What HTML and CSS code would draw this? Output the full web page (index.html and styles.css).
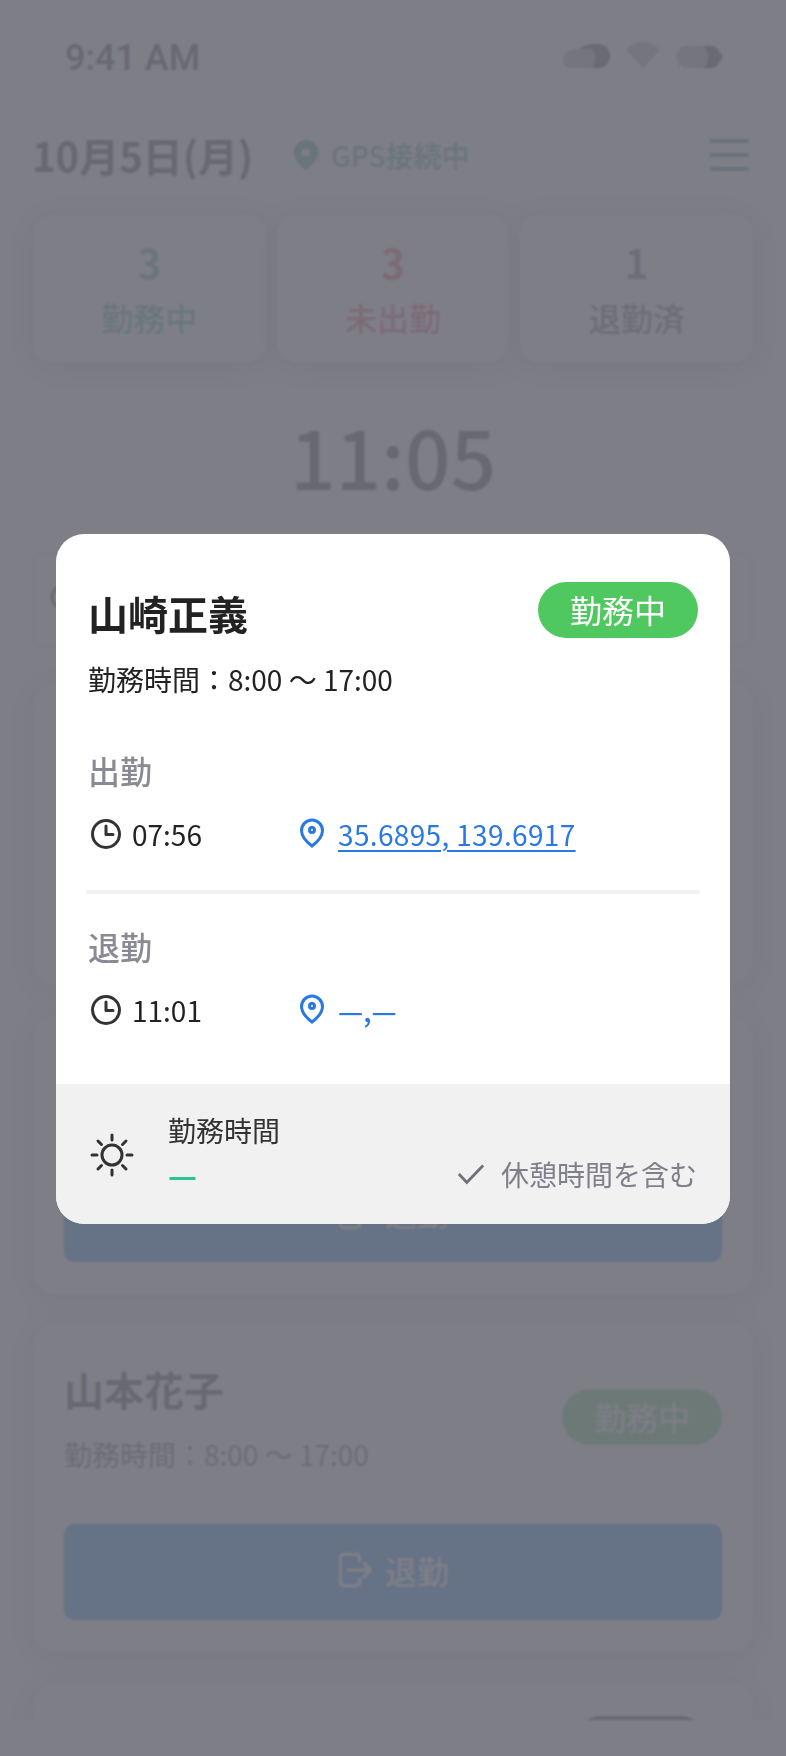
FILE: index.html
```html
<!DOCTYPE html>
<html lang="ja">
<head>
    <meta charset="UTF-8">
    <meta name="viewport" content="width=device-width, initial-scale=1.0">
    <title>勤怠管理</title>
    <link rel="stylesheet" href="styles.css">
</head>
<body>
    <div class="page">
        <div class="status-bar">
            <span class="status-time">9:41 AM</span>
            <div class="status-icons">
                <svg width="47" height="24" viewBox="0 0 47 24"><path class="icon-back" d="M14 24V12C14 5 20 0 32 0h3a12 12 0 0 1 0 24z"/><path class="icon-front" d="M0 16c0-5 4-9 9-10L28 4c3 2 4 6 4 10 0 4-1 7-3 10H8c-4 0-8-3-8-8z"/></svg>
                <svg width="34" height="26" viewBox="0 0 34 26"><path class="icon-front" d="M0 8C5 3 11 0 17 0s12 3 17 8L17 26z"/></svg>
                <svg width="47" height="22" viewBox="0 0 47 22"><path class="icon-back" d="M20 0h16c3 0 5 2 6 4l5 7-5 7c-1 2-3 4-6 4H20z"/><path class="icon-front" d="M11 0h16c4 3 5 7 5 11s-1 8-5 11H11a11 11 0 0 1 0-22z"/></svg>
            </div>
        </div>

        <header class="top-bar">
            <h1 class="date">10月5日(月)</h1>
            <div class="gps">
                <svg width="26" height="30" viewBox="0 0 26 30"><path class="gps-pin" fill-rule="evenodd" d="M13 0a12.500 12.500 0 0 1 12.500 12.500C25.500 20 17 27 13 30 9 27 .5 20 .5 12.500A12.500 12.500 0 0 1 13 0zm0 8.500a4 4 0 1 0 0 8 4 4 0 0 0 0-8z"/></svg>
                <span>GPS接続中</span>
            </div>
            <div class="menu"><i></i><i></i><i></i></div>
        </header>

        <section class="stats">
            <div class="stat stat-green"><b>3</b><span>勤務中</span></div>
            <div class="stat stat-red"><b>3</b><span>未出勤</span></div>
            <div class="stat stat-gray"><b>1</b><span>退勤済</span></div>
        </section>

        <div class="clock">11:05</div>

        <div class="search">
            <svg width="32" height="32" viewBox="0 0 32 32"><circle class="search-ring" cx="14" cy="14" r="11"/><path class="search-ring" d="M22 22l8 8"/></svg>
        </div>

        <div class="card card-first"></div>

        <div class="card card-second">
            <button class="leave-btn">
                <svg width="36" height="36" viewBox="0 0 32 32"><path class="leave-icon" d="M17 2H6a3 3 0 0 0-3 3v22a3 3 0 0 0 3 3h11a3 3 0 0 0 3-3v-3M20 8V5a3 3 0 0 0-3-3M10 16h20M24 10l6 6-6 6"/></svg>
                <span>退勤</span>
            </button>
        </div>

        <div class="card card-third">
            <div class="card-head">
                <div>
                    <div class="card-name">山本花子</div>
                    <div class="card-hours">勤務時間：8:00 〜 17:00</div>
                </div>
                <span class="badge">勤務中</span>
            </div>
            <button class="leave-btn">
                <svg width="36" height="36" viewBox="0 0 32 32"><path class="leave-icon" d="M17 2H6a3 3 0 0 0-3 3v22a3 3 0 0 0 3 3h11a3 3 0 0 0 3-3v-3M20 8V5a3 3 0 0 0-3-3M10 16h20M24 10l6 6-6 6"/></svg>
                <span>退勤</span>
            </button>
        </div>

        <div class="card card-last">
            <span class="badge badge-gray"></span>
        </div>

        <div class="page-foot"></div>
    </div>

    <div class="overlay">
        <div class="modal">
            <div class="modal-body">
                <div class="modal-head">
                    <h2 class="modal-name">山崎正義</h2>
                    <span class="modal-badge">勤務中</span>
                </div>
                <p class="modal-hours">勤務時間：8:00 〜 17:00</p>

                <h3 class="punch-title punch-title-in">出勤</h3>
                <div class="punch-row">
                    <div class="punch-time">
                        <svg width="32" height="32" viewBox="0 0 32 32"><circle class="clock-icon" cx="16" cy="16" r="13.500"/><path class="clock-icon" d="M16 8v8.500h7"/></svg>
                        <span>07:56</span>
                    </div>
                    <svg class="pin" width="26" height="30" viewBox="0 0 26 30"><path class="pin-line" d="M13 2a10.500 10.500 0 0 1 10.500 10.500C23.500 19 17 25 13 28 9 25 2.500 19 2.500 12.500A10.500 10.500 0 0 1 13 2z"/><circle class="pin-line" cx="13" cy="12" r="2.500"/></svg>
                    <a class="coords" href="#">35.6895, 139.6917</a>
                </div>

                <div class="divider"></div>

                <h3 class="punch-title">退勤</h3>
                <div class="punch-row">
                    <div class="punch-time">
                        <svg width="32" height="32" viewBox="0 0 32 32"><circle class="clock-icon" cx="16" cy="16" r="13.500"/><path class="clock-icon" d="M16 8v8.500h7"/></svg>
                        <span>11:01</span>
                    </div>
                    <svg class="pin" width="26" height="30" viewBox="0 0 26 30"><path class="pin-line" d="M13 2a10.500 10.500 0 0 1 10.500 10.500C23.500 19 17 25 13 28 9 25 2.500 19 2.500 12.500A10.500 10.500 0 0 1 13 2z"/><circle class="pin-line" cx="13" cy="12" r="2.500"/></svg>
                    <span class="coords coords-empty">—,—</span>
                </div>
            </div>

            <div class="modal-foot">
                <svg class="sun" width="44" height="44" viewBox="0 0 44 44"><circle class="sun-line" cx="22" cy="22" r="10"/><path class="sun-line" d="M22 2v5M22 37v5M2 22h5M37 22h5M8 8l3.500 3.500M32.500 32.500L36 36M8 36l3.500-3.500M32.500 11.500L36 8"/></svg>
                <div class="total">
                    <div class="total-label">勤務時間</div>
                    <div class="total-value">—</div>
                </div>
                <div class="break-note">
                    <svg width="28" height="22" viewBox="0 0 30 22"><path class="check" d="M2 11l8.500 9L28 2"/></svg>
                    <span>休憩時間を含む</span>
                </div>
            </div>
        </div>
    </div>
</body>
</html>
```

FILE: styles.css
```css
* {
    box-sizing: border-box;
}
html, body {
    margin: 0;
    height: 100%;
}
body {
    font-family: "Noto Sans CJK JP", "Noto Sans", sans-serif;
    background: #fafafa;
    color: #222;
    overflow: hidden;
}
h1, h2, h3, p {
    margin: 0;
    font-weight: normal;
}
.page {
    height: 1756px;
    position: relative;
    overflow: hidden;
}
.status-bar {
    height: 119px;
    padding: 38px 63px 0 65px;
    display: flex;
    justify-content: space-between;
    align-items: flex-start;
}
.status-time {
    font-family: Roboto, sans-serif;
    font-size: 36px;
    font-weight: 500;
    line-height: 40px;
    color: #222;
}
.status-icons {
    display: flex;
    gap: 16px;
    align-items: flex-end;
    padding-top: 4px;
}
.icon-back {
    fill: #333;
}
.icon-front {
    fill: #a0a0a0;
}
.top-bar {
    display: flex;
    align-items: center;
    height: 72px;
    padding: 0 37px 0 32px;
}
.date {
    font-size: 40px;
    font-weight: 700;
    line-height: 60px;
}
.gps {
    display: flex;
    align-items: center;
    gap: 12px;
    margin-left: 40px;
    font-size: 28px;
    font-weight: 500;
    color: #29a36a;
}
.gps-pin {
    fill: #29a36a;
}
.menu {
    margin-left: auto;
    width: 39px;
    display: flex;
    flex-direction: column;
    gap: 10px;
}
.menu i {
    height: 4px;
    border-radius: 2px;
    background: #1f8a80;
}
.stats {
    display: grid;
    grid-template-columns: repeat(3, 1fr);
    gap: 11px;
    padding: 24px 33px 0;
}
.stat {
    height: 147px;
    border-radius: 20px;
    background: #fff;
    box-shadow: 0 4px 30px rgba(0, 0, 0, 0.25);
    display: flex;
    flex-direction: column;
    align-items: center;
    padding-top: 22px;
}
.stat b {
    font-size: 40px;
    font-weight: 700;
    line-height: 50px;
}
.stat span {
    font-size: 32px;
    font-weight: 500;
    line-height: 46px;
    margin-top: 7px;
}
.stat-green {
    color: #29b56c;
}
.stat-red {
    color: #e0404a;
}
.stat-gray {
    color: #555;
}
.clock {
    height: 190px;
    text-align: center;
    font-size: 80px;
    font-weight: 500;
    line-height: 122px;
    padding-top: 32px;
    color: #222;
}
.search {
    height: 96px;
    margin: 0 33px;
    border: 2px solid #e4e4e4;
    border-radius: 6px;
    background: #fff;
    padding: 29px 0 0 14px;
}
.search-ring {
    fill: none;
    stroke: #333;
    stroke-width: 3;
}
.card {
    margin: 31px 33px 0;
    background: #fff;
    border-radius: 24px;
    box-shadow: 0 4px 30px rgba(0, 0, 0, 0.22);
    padding: 38px 31px 32px;
    display: flex;
    flex-direction: column;
    justify-content: space-between;
}
.card-first {
    margin-top: 35px;
    height: 302px;
}
.card-second {
    height: 278px;
    justify-content: flex-end;
}
.card-third {
    margin-top: 29px;
    height: 329px;
}
.card-last {
    height: 200px;
    padding-top: 33px;
    align-items: flex-end;
    justify-content: flex-start;
}
.card-head {
    display: flex;
    justify-content: space-between;
    align-items: flex-end;
}
.card-name {
    font-size: 40px;
    font-weight: 700;
    line-height: 56px;
}
.card-hours {
    font-size: 28px;
    line-height: 40px;
    margin-top: 17px;
    color: #444;
}
.badge {
    height: 56px;
    width: 160px;
    border-radius: 28px;
    background: #50c860;
    color: #fff;
    font-size: 32px;
    line-height: 54px;
    text-align: center;
    margin-bottom: 29px;
}
.badge-gray {
    width: 136px;
    background: #222;
    margin: 0 13px 0 0;
}
.leave-btn {
    height: 96px;
    border: none;
    border-radius: 10px;
    background: #0a85ea;
    color: #fff;
    font-family: inherit;
    font-size: 32px;
    font-weight: 500;
    display: flex;
    align-items: center;
    justify-content: center;
    gap: 12px;
    padding: 0 0 5px;
}
.leave-icon {
    fill: none;
    stroke: #fff;
    stroke-width: 3;
    stroke-linecap: round;
    stroke-linejoin: round;
}
.page-foot {
    position: absolute;
    left: 0;
    right: 0;
    bottom: 0;
    height: 36px;
    background: #fafafa;
}

/* dialog */
.overlay {
    position: fixed;
    inset: 0;
    padding-top: 2px;
    background: rgba(112, 112, 122, 0.9);
    backdrop-filter: blur(1px);
    display: flex;
    align-items: center;
    justify-content: center;
}
.modal {
    width: 674px;
    height: 690px;
    background: #fff;
    border-radius: 28px;
    overflow: hidden;
    display: flex;
    flex-direction: column;
}
.modal-body {
    flex: 1;
    padding: 48px 32px 0;
}
.modal-head {
    display: flex;
    justify-content: space-between;
    align-items: flex-start;
}
.modal-name {
    font-size: 40px;
    font-weight: 700;
    line-height: 58px;
    margin-top: 2px;
    color: #222;
}
.modal-badge {
    width: 160px;
    height: 56px;
    border-radius: 28px;
    background: #50c860;
    color: #fff;
    font-size: 32px;
    line-height: 54px;
    text-align: center;
}
.modal-hours {
    font-size: 28px;
    line-height: 40px;
    margin-top: 17px;
    color: #222;
}
.punch-title {
    font-size: 32px;
    font-weight: 500;
    line-height: 46px;
    color: #8a8a94;
    margin-top: 29px;
}
.punch-title-in {
    margin-top: 48px;
}
.punch-row {
    display: flex;
    align-items: center;
    height: 40px;
    margin-top: 21px;
    font-size: 28px;
}
.punch-time {
    display: flex;
    align-items: center;
    gap: 10px;
    width: 211px;
    padding-left: 2px;
    color: #222;
}
.clock-icon {
    fill: none;
    stroke: #333;
    stroke-width: 3;
    stroke-linecap: round;
    stroke-linejoin: round;
}
.pin {
    flex: none;
    margin-bottom: 3px;
}
.pin-line {
    fill: none;
    stroke: #2a78e4;
    stroke-width: 3;
}
.coords {
    margin-left: 13px;
    color: #2a78e4;
    text-decoration: underline;
    text-decoration-thickness: 2px;
    text-underline-offset: 4px;
    letter-spacing: 0.35px;
}
.coords-empty {
    text-decoration: none;
    font-weight: 500;
    letter-spacing: 0;
}
.divider {
    height: 4px;
    margin: 36px -2px 0;
    border-radius: 2px;
    background: #f1f1f1;
}
.modal-foot {
    height: 140px;
    background: #f1f1f1;
    padding: 26px 33px 0 34px;
    display: flex;
    align-items: flex-start;
}
.sun {
    margin-top: 23px;
}
.sun-line {
    fill: none;
    stroke: #333;
    stroke-width: 3;
    stroke-linecap: round;
}
.total {
    margin-left: 34px;
}
.total-label {
    font-size: 28px;
    line-height: 40px;
    color: #333;
}
.total-value {
    font-size: 32px;
    font-weight: 700;
    line-height: 40px;
    margin-top: 4px;
    color: #2dc48d;
}
.break-note {
    margin-left: auto;
    margin-top: 44px;
    display: flex;
    align-items: center;
    gap: 16px;
    font-size: 28px;
    line-height: 40px;
    color: #80808a;
}
.check {
    fill: none;
    stroke: #70707a;
    stroke-width: 3;
}
```
